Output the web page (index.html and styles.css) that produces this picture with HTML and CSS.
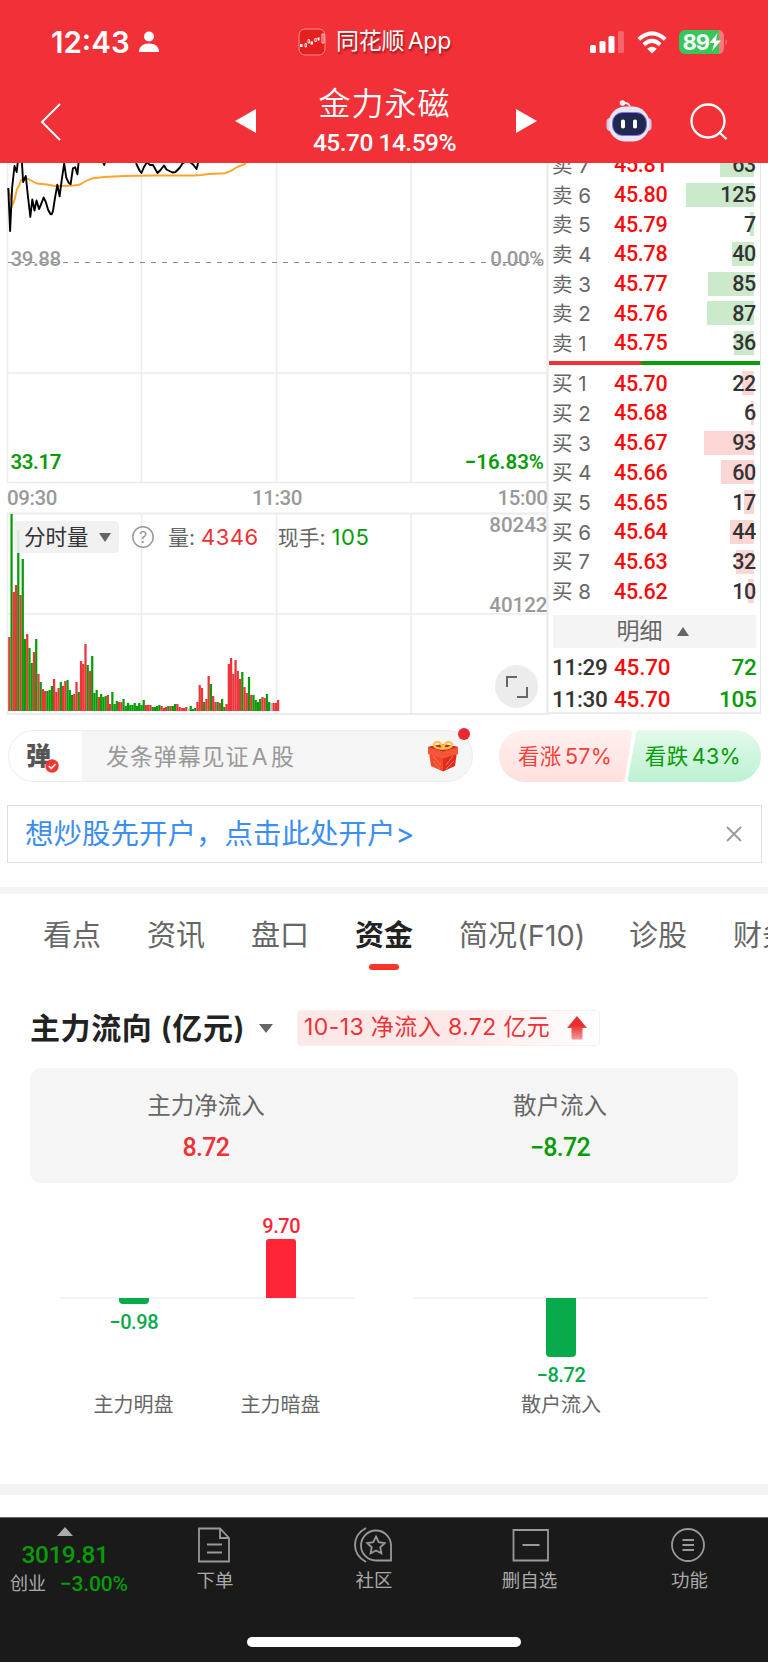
FILE: index.html
```html
<!DOCTYPE html>
<html lang="zh-CN">
<head>
    <meta charset="UTF-8">
    <meta name="viewport" content="width=device-width, initial-scale=1.0">
    <title>金力永磁</title>
    <link rel="stylesheet" href="styles.css">
</head>
<body>
    <header class="header">
        <div class="status-bar">
            <div class="status-left">
                <span class="clock">12:43</span>
                <svg width="20" height="22" viewBox="0 0 20 22" fill="#fff"><circle cx="10" cy="5.5" r="5"/><path d="M0 21c0-5.500 4-8.500 10-8.500s10 3 10 8.500z"/></svg>
            </div>
            <div class="status-app">
                <svg width="28" height="28" viewBox="0 0 28 28" fill="none" stroke="#fff">
                    <rect x="1" y="1" width="26" height="26" rx="6" fill="#e5211f" stroke="#ff8c8c"/>
                    <path d="M2 17.500h2.500M12.500 15h2.500M19.500 11h2" stroke-width="3"/>
                    <path d="M7 15.500v3.500h1.500v-3.500zM10 11.500v3.500h1.500v-3.500zM16.800 10.500v3h1.500v-3zM24 6v9h2v-9z" stroke-width=".8"/>
                </svg>
                <span>同花顺 App</span>
            </div>
            <div class="status-right">
                <svg width="35" height="23" viewBox="0 0 35 23" fill="#fff"><rect x="0" y="14" width="6" height="8" rx="1.500"/><rect x="9.500" y="10" width="6" height="12" rx="1.500"/><rect x="18.500" y="5" width="6" height="17" rx="1.500"/><rect x="28" y="0" width="6" height="22" rx="1.500" opacity=".25"/></svg>
                <svg width="30" height="23" viewBox="0 0 30 23" fill="none" stroke="#fff" stroke-width="4"><path d="M1.800 8.300q13.200-12 26.400 0"/><path d="M6.800 13.700q8.200-7.600 16.400 0"/><path d="M15 22.500l-4.800-4.700q4.800-4.200 9.600 0z" fill="#fff" stroke="none"/></svg>
                <svg width="48" height="24" viewBox="0 0 48 24">
                    <path d="M6 0h34v24H6a6 6 0 0 1-6-6V6a6 6 0 0 1 6-6z" fill="#34c759"/>
                    <path d="M40 0a5 6 0 0 1 5 6v12a5 6 0 0 1-5 6z" fill="#fff" opacity=".35"/>
                    <path d="M46.500 8.500q3 3.500 0 7z" fill="#fff" opacity=".35"/>
                    <text x="3.500" y="19.500" class="battery-text">89</text>
                    <path d="M38.500 3l-8 10h5l-2.500 8 9-10.500h-5z" fill="#fff"/>
                </svg>
            </div>
        </div>
        <div class="nav-bar">
            <svg class="back" width="22" height="38" viewBox="0 0 22 38" fill="none" stroke="#fff" stroke-width="2"><path d="M20 1L2 19l18 18"/></svg>
            <svg class="prev" width="21" height="24" viewBox="0 0 21 24" fill="#fff"><path d="M21 0v24L0 12z"/></svg>
            <div class="stock">
                <div class="stock-name">金力永磁</div>
                <div class="stock-price">45.70 14.59%</div>
            </div>
            <svg class="next" width="21" height="24" viewBox="0 0 21 24" fill="#fff"><path d="M0 0v24l21-12z"/></svg>
            <svg class="robot" width="46" height="42" viewBox="0 0 46 42">
                <path d="M16 3.500q6-2 8 3" fill="none" stroke="#e4e4f4" stroke-width="2"/>
                <circle cx="16.500" cy="3" r="2.800" fill="#f1f1fa"/>
                <rect x="0.500" y="18" width="8" height="13" rx="4" fill="#c9c9ec"/>
                <rect x="37.500" y="18" width="8" height="13" rx="4" fill="#c9c9ec"/>
                <rect x="2.500" y="6.500" width="41" height="35" rx="17" fill="#e6e6f5"/>
                <rect x="6.500" y="12.500" width="34" height="23" rx="10" fill="#20294d" stroke="#8d6bea"/>
                <rect x="15" y="19.500" width="4" height="9" rx="1.800" fill="#fff"/>
                <rect x="27" y="19.500" width="4" height="9" rx="1.800" fill="#fff"/>
            </svg>
            <svg class="search" width="38" height="38" viewBox="0 0 38 38" fill="none" stroke="#fff" stroke-width="2.300"><circle cx="18" cy="18" r="16.500"/><path d="M29.500 29.500l7 6.500"/></svg>
        </div>
    </header>

    <section class="market">
        <div class="charts">
            <svg class="chart-svg" width="549" height="552" viewBox="0 163 549 552">
                <g stroke="#ececec" stroke-width="1.500">
                    <path d="M7.500 163V483M141.500 163V483M276.500 163V483M411 163V483"/>
                    <path d="M7.500 513V714M141.500 513V714M276.500 513V714M411 513V714"/>
                    <path d="M7 373H547M7 482.500H547M7 614H547"/>
                    <path d="M7 513.500H547M7 714H547" stroke-width="2"/>
                    <path d="M547.500 163V715" stroke-width="2.500"/>
                </g>
                <path d="M8 262.500H547" stroke="#888" stroke-dasharray="5 6" stroke-width="1.200"/>
                <path d="M8 188l4.500 17 2-5 2.500-11 2-3 2-6 3-1h4l4 2 5 2.500 10 1 8 1.500h6l13-.5 6-1 5-3 7-3 12-1.500 20-1 30-.5h40l8-.5 6-1 17-.8 6-2.200 6-4 9-3.500" fill="none" stroke="#ffa42a" stroke-width="1.900"/>
                <path d="M8.300 188l1.800 43 2-43 2.400-22 2.200 6 1.300-12h3.800l1.300 22 2.700-6 2 19 2.500 22 2-17.500 2.200 11 2-10 2.500 8.500 2.200-5 2.400-6.500 2.200 4.500 2.400 8 2.200 4 1.200.3 1.300-3 2.200-14 2.200-12.500 2.300 11.500 2.200-17 2.400-16 2 14 2.500 5.500 1.900 1.500 2.300-16 2.300-1 2.200 7 1.300-13M103 162l1.200 3 1-3M136 163l3.500 7.500 2 2.500 2.500-6 3-5 3 3h3l4.500 8 3-3 3.500-4.500 2.500 4 3 1.500 3 1.500 3-.5 4-4 3-4.500 3.500-2 4 .5 3.500 3 3 4 3-11" fill="none" stroke="#000" stroke-width="1.900" stroke-linejoin="round"/>
                <g id="volume"></g>
                <g class="chart-label">
                    <text x="10.500" y="266">39.88</text>
                    <text x="544" y="266" text-anchor="end">0.00%</text>
                    <text x="10.500" y="469" class="fall strong">33.17</text>
                    <text x="544" y="469" text-anchor="end" class="fall strong wide">−16.83%</text>
                    <text x="7" y="504.500">09:30</text>
                    <text x="277" y="504.500" text-anchor="middle">11:30</text>
                    <text x="547.500" y="504.500" text-anchor="end">15:00</text>
                    <text x="547.500" y="531.500" text-anchor="end" class="wide">80243</text>
                    <text x="547.500" y="612" text-anchor="end" class="wide">40122</text>
                </g>
            </svg>
            <div class="volume-bar">
                <div class="volume-select">分时量<i class="arrow-down"></i></div>
                <svg width="22" height="22" viewBox="0 0 22 22"><circle cx="11" cy="11" r="10.200" fill="none" stroke="#999" stroke-width="1.500"/><text x="11" y="16.500" text-anchor="middle" class="help-text">?</text></svg>
                <span class="volume-item">量: <b class="rise">4346</b></span>
                <span class="volume-item">现手: <b class="fall">105</b></span>
            </div>
            <div class="expand">
                <svg width="22" height="22" viewBox="0 0 22 22" fill="none" stroke="#666" stroke-width="2"><path d="M1 11V1h10M21 11v10H11"/></svg>
            </div>
        </div>
        <div class="order-book">
            <div id="sell"></div>
            <div class="ratio"><i class="ratio-buy"></i><i class="ratio-sell"></i></div>
            <div id="buy"></div>
            <div class="detail-title">明细<i class="arrow-up"></i></div>
            <div class="deal"><span>11:29</span><b>45.70</b><em>72</em></div>
            <div class="deal"><span>11:30</span><b>45.70</b><em>105</em></div>
        </div>
    </section>

    <section class="danmu-row">
        <div class="danmu">
            <div class="danmu-icon">弹
                <svg class="danmu-check" width="14" height="14" viewBox="0 0 14 14"><circle cx="7" cy="7" r="6.700" fill="#f5352e"/><path d="M3.800 7l2.500 2.500 4.200-4.500" fill="none" stroke="#fff" stroke-width="1.600"/></svg>
            </div>
            <div class="danmu-input">发条弹幕见证 A 股</div>
            <svg class="gift" width="32" height="34" viewBox="0 0 32 34">
                <path d="M2 13l14 5v14.500L4 27z" fill="#f0492c"/>
                <path d="M30 13l-14 5v14.500L28 27z" fill="#df2c1c"/>
                <path d="M1 8l15-3 15 3v7l-15 4.500L1 15z" fill="#f6553a"/>
                <path d="M1 8l15 4.500L31 8 16 5z" fill="#c92a16"/>
                <path d="M6 17l8 9M6 22l7 8M26 17l-7 9M27 22l-8 8" stroke="#ff7a4f"/>
                <path d="M16 9.500C7 10 5 5.500 8.500 3.500s6.500 1.500 7.500 6c1-4.500 4-8 7.500-6s1.500 6-7.500 6z" fill="none" stroke="#fbc452" stroke-width="2.300"/>
            </svg>
            <i class="dot"></i>
        </div>
        <div class="vote">
            <svg width="262" height="52" viewBox="0 0 262 52">
                <defs>
                    <linearGradient id="up" x1="0" y1="0" x2="0" y2="1"><stop offset="0" stop-color="#fff0ef"/><stop offset="1" stop-color="#ffe0de"/></linearGradient>
                    <linearGradient id="down" x1="0" y1="0" x2="0" y2="1"><stop offset="0" stop-color="#e3faeb"/><stop offset="1" stop-color="#bdf1d2"/></linearGradient>
                </defs>
                <path d="M26 0H130q3.500 0 3 3.500L126 48q-.5 4-4.500 4H26a26 26 0 0 1 0-52z" fill="url(#up)"/>
                <path d="M141 0H236a26 26 0 0 1 0 52H132q-3.500 0-3-3.500L137 4q.5-4 4-4z" fill="url(#down)"/>
            </svg>
            <div class="vote-text"><span class="vote-up">看涨 57%</span><span class="vote-down">看跌 43%</span></div>
        </div>
    </section>

    <section class="ad">
        <span>想炒股先开户，点击此处开户&gt;</span>
        <svg width="16" height="16" viewBox="0 0 16 16" stroke="#999" stroke-width="1.800"><path d="M1 1l14 14M15 1L1 15"/></svg>
    </section>

    <div class="divider"></div>

    <nav class="tabs">
        <span>看点</span>
        <span>资讯</span>
        <span>盘口</span>
        <span class="active">资金</span>
        <span>简况(F10)</span>
        <span>诊股</span>
        <span>财务</span>
    </nav>

    <section class="flow">
        <div class="flow-head">
            <h2>主力流向 (亿元)</h2>
            <i class="arrow-down"></i>
            <div class="flow-tag">
                <span>10-13 净流入 8.72 亿元</span>
                <svg width="20" height="24" viewBox="0 0 20 24">
                    <defs><linearGradient id="arrow" x1="0" y1="0" x2="0" y2="1"><stop offset=".4" stop-color="#e93030"/><stop offset="1" stop-color="#f59a9a"/></linearGradient></defs>
                    <path d="M10 0l10 12h-4.500v10.500q0 1-1 1h-9q-1 0-1-1V12H0z" fill="url(#arrow)"/>
                </svg>
            </div>
        </div>
        <div class="summary">
            <div><p>主力净流入</p><strong class="rise">8.72</strong></div>
            <div><p>散户流入</p><strong class="fall">−8.72</strong></div>
        </div>
        <div class="bar-charts">
            <div class="bar-chart">
                <div class="bar-col negative">
                    <i style="height: 6px"></i><span>−0.98</span>
                </div>
                <div class="bar-col positive">
                    <span>9.70</span><i style="height: 59px"></i>
                </div>
            </div>
            <div class="bar-chart">
                <div class="bar-col negative">
                    <i style="height: 59px"></i><span>−8.72</span>
                </div>
            </div>
        </div>
        <div class="bar-names">
            <div><span>主力明盘</span><span>主力暗盘</span></div>
            <div><span>散户流入</span></div>
        </div>
    </section>

    <div class="divider thick"></div>

    <footer class="toolbar">
        <div class="toolbar-items">
            <div class="index">
                <i class="arrow-up"></i>
                <div class="index-value">3019.81</div>
                <div class="index-change"><span>创业</span><b>−3.00%</b></div>
            </div>
            <div class="tool">
                <svg width="34" height="36" viewBox="0 0 34 36"><path d="M2 1.500h21l9 9.500v23.500H2zM23 1.500v9.500h9M10 17.500h15M10 25.500h15"/></svg>
                <span>下单</span>
            </div>
            <div class="tool">
                <svg width="40" height="36" viewBox="0 0 40 36"><path d="M23 33.500h15V18a15 15 0 1 0-15 15.500zM13 1Q2 7 2 18t11 17M23 9.500l2.700 5.600 6 .9-4.400 4.300 1.100 6.100-5.400-2.900-5.400 2.900 1.100-6.100-4.400-4.300 6-.9z"/></svg>
                <span>社区</span>
            </div>
            <div class="tool">
                <svg width="38" height="36" viewBox="0 0 38 36"><path d="M1.500 3h34.500v30.500H1.500zM10.500 18h17"/></svg>
                <span>删自选</span>
            </div>
            <div class="tool">
                <svg width="36" height="36" viewBox="0 0 36 36"><circle cx="18" cy="18" r="16"/><path d="M12.500 13h11.500M12.500 18h11.500M12.500 23h11.500"/></svg>
                <span>功能</span>
            </div>
        </div>
        <div class="home-bar"></div>
    </footer>

    <script src="script.js"></script>
</body>
</html>
```

FILE: styles.css
```css
* {
    box-sizing: border-box;
}

body {
    margin: 0;
    width: 768px;
    height: 1663px;
    overflow: hidden;
    background: #fff;
    color: #333;
    font-family: Inter, "Noto Sans CJK SC", sans-serif;
}

i, em {
    font-style: normal;
}

svg {
    display: block;
    flex: none;
}

.rise {
    color: #ee3136;
    fill: #ee3136;
}

.fall {
    color: #069c06;
    fill: #069c06;
}

.arrow-down {
    border: 6px solid transparent;
    border-top: 9px solid #666;
    border-bottom: 0;
}

.arrow-up {
    border: 6px solid transparent;
    border-bottom: 9px solid #666;
    border-top: 0;
}

/* 顶部 */
.header {
    height: 163px;
    background: #f23037;
    color: #fff;
    position: relative;
    z-index: 1;
}

.status-bar {
    height: 85px;
    padding: 0 41px 1px 51px;
    display: grid;
    grid-template-columns: 247px 1fr 136px;
    align-items: center;
}

.status-left, .status-app, .status-right {
    display: flex;
    align-items: center;
}

.status-left {
    gap: 8px;
}

.clock {
    width: 80px;
    font-size: 29.5px;
    font-weight: 600;
    line-height: 34px;
    white-space: nowrap;
}

.status-app {
    gap: 10px;
    font-size: 23px;
    line-height: 30px;
    white-space: nowrap;
    text-shadow: 1px 2px 2px rgba(90, 0, 0, 0.6);
}

.status-app span {
    letter-spacing: -0.2px;
    word-spacing: -3px;
    margin-bottom: 3px;
}

.status-right {
    gap: 12px;
    justify-content: flex-end;
}

.battery-text {
    font-size: 22px;
    font-weight: 700;
    font-family: Inter, sans-serif;
    letter-spacing: -1px;
    fill: #fff;
}

.nav-bar {
    height: 78px;
    padding-left: 40px;
    display: flex;
    align-items: flex-start;
}

.back {
    margin-top: 18px;
}

.prev {
    margin: 24px 0 0 173px;
}

.stock {
    width: 260px;
    padding-right: 3px;
    text-align: center;
    white-space: nowrap;
}

.stock-name {
    font-size: 32px;
    font-weight: 350;
    line-height: 38px;
    letter-spacing: 1px;
}

.stock-price {
    margin-top: 5px;
    font: 500 24.5px/30px Roboto, sans-serif;
    letter-spacing: -0.5px;
}

.next {
    margin-top: 24px;
}

.robot {
    margin: 15px 0 0 69px;
}

.search {
    margin: 18px 0 0 38px;
}

/* 行情 */
.market {
    display: flex;
    height: 552px;
    overflow: hidden;
}

.charts {
    width: 549px;
    position: relative;
}

.chart-label {
    font: 500 20.5px Roboto, sans-serif;
    letter-spacing: -0.4px;
    fill: #999;
}

.chart-label .strong {
    font-weight: 600;
}

.chart-label .wide {
    letter-spacing: 0;
}

.volume-bar {
    position: absolute;
    top: 358px;
    left: 14px;
    display: flex;
    align-items: center;
    height: 32px;
}

.volume-select {
    width: 105px;
    height: 32px;
    padding: 0 8px 0 10px;
    margin-right: 13px;
    display: flex;
    align-items: center;
    justify-content: space-between;
    border-radius: 4px;
    background: rgba(240, 240, 240, 0.9);
    font-size: 21.5px;
    line-height: 32px;
}

.help-text {
    font: 16px Inter, sans-serif;
    fill: #999;
}

.volume-item {
    margin-left: 14px;
    margin-right: 5px;
    color: #666;
    font-size: 21px;
    line-height: 32px;
    white-space: nowrap;
}

.volume-item b {
    font-size: 22px;
    font-weight: 400;
    letter-spacing: 0.5px;
}

.expand {
    position: absolute;
    left: 495px;
    top: 502px;
    width: 43px;
    height: 43px;
    border-radius: 50%;
    background: #ececec;
    display: flex;
    align-items: center;
    justify-content: center;
}

.order-book {
    width: 212px;
    height: 551px;
    border-right: 1.5px solid #e8e8e8;
    border-bottom: 2px solid #ececec;
}

#sell {
    margin-top: -13px;
}

.order {
    position: relative;
    height: 29.7px;
    padding: 0 4px 0 3px;
    display: flex;
    align-items: center;
    line-height: 29px;
}

.order span {
    width: 62px;
    padding-top: 1px;
    font-size: 20.5px;
    color: #666;
}

.order b, .order em {
    font: 500 21.5px/29px Roboto, sans-serif;
    position: relative;
}

.order b {
    color: #fd0808;
    letter-spacing: -0.3px;
}

.order em {
    margin-left: auto;
    letter-spacing: -0.3px;
}

.order i {
    position: absolute;
    right: 6px;
    top: 3px;
    height: 24px;
    background: #cbe9cb;
}

#buy .order i {
    background: #fcd5d5;
}

.ratio {
    display: flex;
    height: 4px;
    margin: 3px 0 3.600px;
}

.ratio-buy {
    width: 92px;
    background: #ec3338;
}

.ratio-sell {
    flex: 1;
    background: #069c06;
}

.detail-title {
    width: 203px;
    height: 33px;
    margin: 8.800px 0 4.500px 4px;
    padding-right: 4px;
    display: flex;
    align-items: center;
    justify-content: center;
    gap: 14px;
    background: #f4f4f4;
    color: #666;
    font-size: 23px;
    line-height: 33px;
}

.deal {
    height: 31.5px;
    padding: 0 3.500px 0 3px;
    display: flex;
    font: 500 22.5px/31px Roboto, sans-serif;
}

.deal span {
    width: 62px;
    letter-spacing: -0.3px;
}

.deal b {
    font-weight: 500;
    color: #fd0808;
    letter-spacing: -0.2px;
}

.deal em {
    margin-left: auto;
    color: #069c06;
    letter-spacing: -0.3px;
}

/* 弹幕 */
.danmu-row {
    padding: 15px 7px 0 8px;
    display: flex;
    justify-content: space-between;
}

.danmu {
    position: relative;
    width: 465px;
    height: 52px;
    border: 1.5px solid #ececec;
    border-radius: 26px;
    display: flex;
    align-items: center;
    background: linear-gradient(to right, #fff 73px, #f5f5f5 73px);
}

.danmu-icon {
    position: relative;
    width: 73px;
    padding-left: 17px;
    font-size: 25px;
    font-weight: 900;
    line-height: 46px;
    color: #555;
}

.danmu-check {
    position: absolute;
    left: 36px;
    top: 26px;
}

.danmu-input {
    flex: 1;
    padding: 0 0 3px 24px;
    font-size: 23px;
    letter-spacing: 0.9px;
    word-spacing: -5px;
    color: #999;
}

.gift {
    margin-right: 13px;
}

.dot {
    position: absolute;
    right: 2px;
    top: -3px;
    width: 12px;
    height: 12px;
    border-radius: 50%;
    background: #e9292c;
}

.vote {
    position: relative;
    width: 262px;
}

.vote-text {
    position: absolute;
    inset: 0;
    padding: 0 20px 0 19px;
    display: flex;
    justify-content: space-between;
    font-size: 21.500px;
    line-height: 52px;
    letter-spacing: 0.3px;
    word-spacing: -3px;
}

.vote-up {
    color: #f9403a;
}

.vote-down {
    color: #069c06;
}

/* 广告 */
.ad {
    width: 755px;
    height: 58px;
    margin: 23px 0 24px 7px;
    padding: 0 19px 0 17px;
    border: 1.5px solid #dedede;
    display: flex;
    align-items: center;
    justify-content: space-between;
    color: #3c8ef2;
    font-size: 28.500px;
    line-height: 56px;
}

.divider {
    height: 7px;
    background: #f4f4f4;
}

.divider.thick {
    height: 11px;
}

/* 标签 */
.tabs {
    height: 100px;
    padding-left: 43px;
    display: flex;
    gap: 46px;
    overflow: hidden;
    font-size: 29px;
    line-height: 83px;
    color: #666;
    white-space: nowrap;
}

.tabs span:nth-child(5) {
    width: 124px;
}

.tabs .active {
    position: relative;
    color: #222;
    font-weight: 600;
}

.tabs .active::after {
    content: "";
    position: absolute;
    left: 14px;
    top: 70px;
    width: 30px;
    height: 6px;
    border-radius: 3px;
    background: #fc342c;
}

/* 资金流向 */
.flow {
    height: 490px;
    padding: 16px 30px 0;
}

.flow-head {
    height: 36px;
    display: flex;
    align-items: center;
}

.flow-head h2 {
    width: 229px;
    margin: 0;
    font-size: 30px;
    font-weight: 600;
    line-height: 36px;
    letter-spacing: 0.6px;
    white-space: nowrap;
    color: #222;
}

.flow-head .arrow-down {
    border-left-width: 7px;
    border-right-width: 7px;
}

.flow-tag {
    width: 303px;
    height: 36px;
    margin-left: 24px;
    padding: 0 12px 0 6px;
    display: flex;
    align-items: center;
    justify-content: space-between;
    border: 1px solid #fdeeee;
    border-radius: 4px;
    background: linear-gradient(to right, #fde8e8 50%, #fff);
    color: #ee3136;
    font-size: 23px;
    line-height: 32px;
    letter-spacing: 0.4px;
    white-space: nowrap;
}

.flow-tag span {
    margin-bottom: 3px;
}

.summary {
    height: 115px;
    margin-top: 22px;
    padding-top: 21px;
    border-radius: 11px;
    background: #f5f5f5;
    display: grid;
    grid-template-columns: 1fr 1fr;
    text-align: center;
}

.summary p {
    margin: 0 0 9px -2px;
    color: #666;
    font-size: 23.5px;
    line-height: 34px;
}

.summary strong {
    display: block;
    margin-left: -2px;
    font: 500 25px/32px Roboto, sans-serif;
    letter-spacing: -0.7px;
}

.bar-charts {
    height: 200px;
    margin-top: 15px;
    padding: 0 30px;
    display: grid;
    grid-template-columns: 294px 294px;
    gap: 60px;
}

.bar-chart {
    display: flex;
    justify-content: space-around;
    background: linear-gradient(#f2f2f2, #f2f2f2) 0 99px / 100% 2px no-repeat;
}

.bar-col {
    width: 90px;
    display: flex;
    flex-direction: column;
    align-items: center;
    font: 500 20px/24px Roboto, sans-serif;
    letter-spacing: -0.4px;
}

.bar-col i {
    width: 30px;
}

.positive {
    height: 100px;
    margin-right: -1px;
    justify-content: flex-end;
    color: #ff2436;
}

.positive span {
    margin-bottom: 1px;
}

.positive i {
    background: #ff2436;
    border-radius: 3px 3px 0 0;
}

.negative {
    padding-top: 100px;
    color: #08aa4b;
}

.negative span {
    margin-top: 6px;
}

.negative i {
    background: #08aa4b;
    border-radius: 0 0 4px 4px;
}

.bar-names {
    padding: 0 30px;
    margin-top: -8px;
    display: grid;
    grid-template-columns: 294px 294px;
    gap: 60px;
    color: #666;
    font-size: 20px;
    line-height: 30px;
}

.bar-names div {
    display: flex;
    justify-content: space-around;
}

/* 底部 */
.toolbar {
    height: 145px;
    margin-top: 22px;
    border-top: 1px solid #666;
    background: #1a1a1a;
    color: #aaa;
}

.toolbar-items {
    height: 119px;
    display: grid;
    grid-template-columns: 135px 157px 161px 155px 160px;
}

.index {
    padding-top: 9px;
    display: flex;
    flex-direction: column;
    align-items: center;
}

.index .arrow-up {
    border-width: 0 8px 9px;
    border-bottom-color: #aaa;
    margin-right: 5px;
}

.index-value {
    margin: 5px 5px 0 0;
    color: #069c06;
    font: 500 24.5px/28px Roboto, sans-serif;
    letter-spacing: -0.5px;
}

.index-change {
    width: 100%;
    padding-left: 10px;
    display: flex;
    align-items: center;
    gap: 14px;
    font-size: 18px;
    line-height: 30px;
}

.index-change b {
    color: #069c06;
    font: 500 21px/28px Roboto, sans-serif;
    letter-spacing: -0.2px;
}

.tool {
    padding-top: 9px;
    display: flex;
    flex-direction: column;
    align-items: center;
    font-size: 18.5px;
    line-height: 28px;
}

.tool span {
    margin-top: 3px;
    margin-left: 3px;
}

.tool:nth-child(4) span {
    margin-left: -2px;
}

.tool svg {
    fill: none;
    stroke: #999;
    stroke-width: 1.8px;
}

.home-bar {
    width: 274px;
    height: 10px;
    margin: 0 auto;
    border-radius: 5px;
    background: #fff;
}
```

FILE: script.js
```javascript
// 成交量柱：高度 + 颜色 (r 涨 g 跌 w 平)
const volume = '74r 197g 119r 126r 181g 116r 152g 72g 77r 63g 48g 59r 72g 37r 29g 22r 20r 20g 21g 25g 32r 19r 23r 29g 25r 30r 31g 21g 16g 17r 29r 19g 50r 47r 67r 46g 40r 55g 18g 21g 14r 17g 14g 15g 16r 7r 19g 7g 10g 9r 9r 12g 5g 8g 6g 6g 8g 5g 8g 6g 11g 6r 6r 6r 4g 4g 5g 6g 5r 3r 4r 5g 5r 5g 7g 7r 4r 3r 3r 4r 2w 5g 2g 3g 9r 26r 23r 9g 12r 35r 27g 15r 9r 9g 8r 12g 4g 7r 47r 53r 37r 51r 40r 32r 39g 24r 18r 34g 16r 16g 11g 9g 12g 14r 13r 17g 9g 8w 8r 8r 11r'.split(' ');
const colors = { r: '#ec3338', g: '#069c06', w: '#bbb' };
const group = document.getElementById('volume');

volume.forEach((item, i) => {
    const h = parseInt(item);
    const rect = document.createElementNS('http://www.w3.org/2000/svg', 'rect');
    rect.setAttribute('x', 8.2 + i * 2.24);
    rect.setAttribute('y', 711 - h);
    rect.setAttribute('width', 2.24);
    rect.setAttribute('height', h);
    rect.setAttribute('fill', colors[item.slice(-1)]);
    group.appendChild(rect);
});

// 买卖盘：名称, 价格, 数量, 底色宽度
const sell = [
    ['卖 7', '45.81', 63, 34],
    ['卖 6', '45.80', 125, 68],
    ['卖 5', '45.79', 7, 4],
    ['卖 4', '45.78', 40, 22],
    ['卖 3', '45.77', 85, 46],
    ['卖 2', '45.76', 87, 47],
    ['卖 1', '45.75', 36, 20]
];
const buy = [
    ['买 1', '45.70', 22, 12],
    ['买 2', '45.68', 6, 3],
    ['买 3', '45.67', 93, 50],
    ['买 4', '45.66', 60, 33],
    ['买 5', '45.65', 17, 10],
    ['买 6', '45.64', 44, 24],
    ['买 7', '45.63', 32, 18],
    ['买 8', '45.62', 10, 6]
];

function renderOrders(id, rows) {
    document.getElementById(id).innerHTML = rows.map(row =>
        `<div class="order"><i style="width: ${row[3]}px"></i><span>${row[0]}</span><b>${row[1]}</b><em>${row[2]}</em></div>`
    ).join('');
}

renderOrders('sell', sell);
renderOrders('buy', buy);
```
